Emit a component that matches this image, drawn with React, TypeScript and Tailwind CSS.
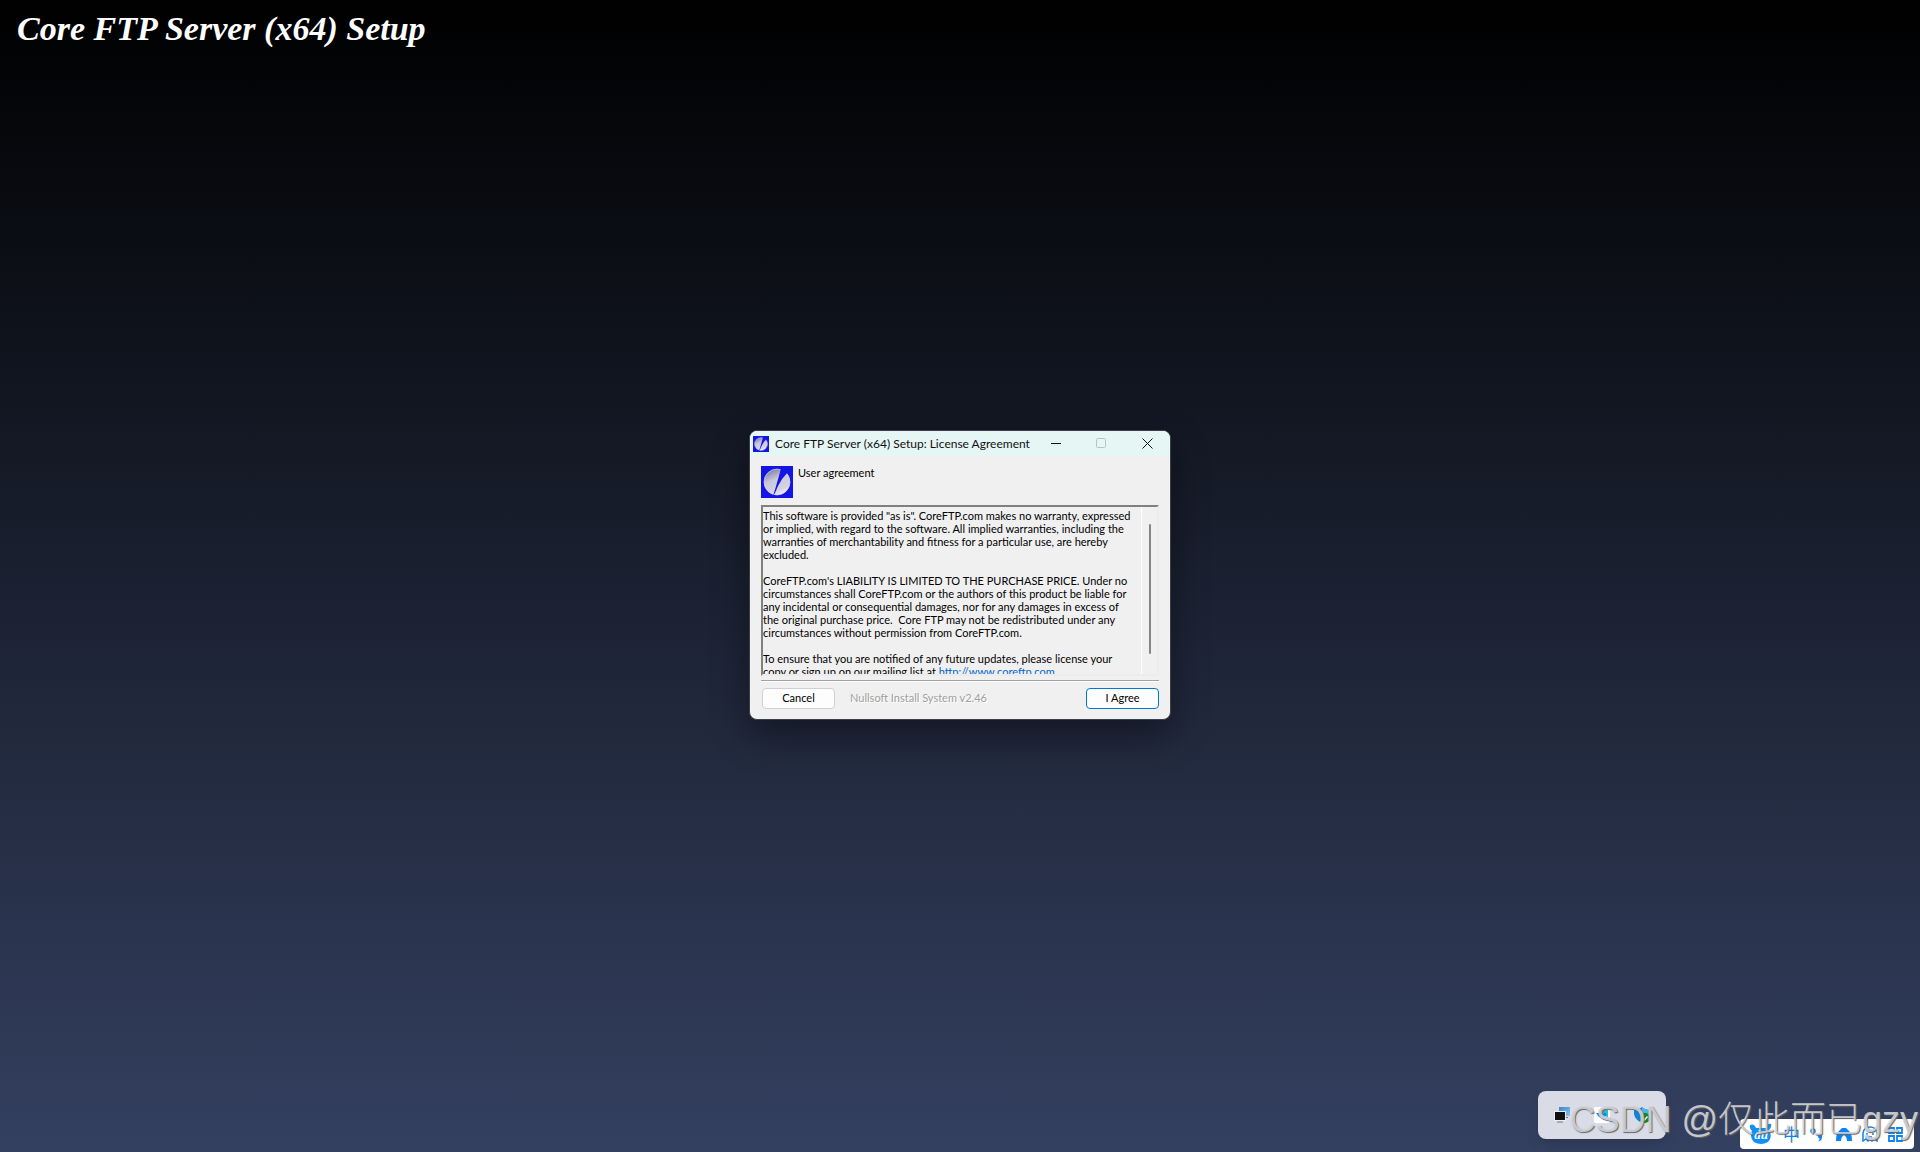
import { useId } from 'react';

function CoreIcon({ className }: { className: string }) {
  const id = useId();
  return (
    <svg viewBox="0 0 32 32" className={className} aria-hidden="true">
      <defs>
        <linearGradient id={id} x1="0.25" y1="0" x2="0.7" y2="1">
          <stop offset="0" stopColor="#7c7ca4" />
          <stop offset="0.4" stopColor="#c9c9dc" />
          <stop offset="0.8" stopColor="#d4d4e4" />
          <stop offset="1" stopColor="#f4f4fa" />
        </linearGradient>
      </defs>
      <rect width="32" height="32" fill="#1414e6" />
      <circle cx="16" cy="16" r="13" fill={`url(#${id})`} stroke="#e6e6f2" strokeWidth="0.6" />
      <path d="M20 2L18.500 8L16.500 15L14.500 22L12 30L14 27L17 20Q21 12 27 6L24 2Z" fill="#1414e6" />
    </svg>
  );
}

function TitleBar() {
  return (
    <header className="flex h-[25px] items-center bg-[#e6f6f5] pl-[3px]">
      <CoreIcon className="size-4 shrink-0" />
      <h2 className="ml-1.5 flex-1 whitespace-nowrap text-[12px] leading-4 text-[#111]">
        Core FTP Server (x64) Setup: License Agreement
      </h2>
      <button aria-label="Minimize" className="grid h-full w-11 place-items-center">
        <svg viewBox="0 0 11 11" className="size-[11px]" stroke="#111" fill="none"><path d="M0 5.500H10" /></svg>
      </button>
      <button aria-label="Maximize" disabled className="grid h-full w-[46px] place-items-center">
        <svg viewBox="0 0 11 11" className="size-[11px]" stroke="#b8c4c4" fill="none"><rect x="0.5" y="0.5" width="9" height="9" rx="1" /></svg>
      </button>
      <button aria-label="Close" className="grid h-full w-[46px] place-items-center">
        <svg viewBox="0 0 11 11" className="size-[11px]" stroke="#111" fill="none"><path d="M0.500 0.500L10.500 10.500M10.500 0.500L0.500 10.500" /></svg>
      </button>
    </header>
  );
}

function License() {
  return (
    <div className="mt-[7px] flex h-[171px] border-2 border-t-[#808080] border-l-[#808080] border-r-[#ececec] border-b-[#ececec]">
      <div className="flex-1 overflow-hidden whitespace-pre pt-0.5 text-[11px] leading-[13px]">
        <p>{'This software is provided "as is". CoreFTP.com makes no warranty, expressed\nor implied, with regard to the software. All implied warranties, including the\nwarranties of merchantability and fitness for a particular use, are hereby\nexcluded.'}</p>
        <p className="mt-[13px]">{"CoreFTP.com's LIABILITY IS LIMITED TO THE PURCHASE PRICE. Under no\ncircumstances shall CoreFTP.com or the authors of this product be liable for\nany incidental or consequential damages, nor for any damages in excess of\nthe original purchase price.  Core FTP may not be redistributed under any\ncircumstances without permission from CoreFTP.com."}</p>
        <p className="mt-[13px]">
          {'To ensure that you are notified of any future updates, please license your\ncopy or sign up on our mailing list at '}
          <a href="http://www.coreftp.com" className="text-[#0066cc] underline">http://www.coreftp.com</a>
        </p>
      </div>
      <div className="flex w-4 justify-center border-l border-white pt-[17px] pb-5">
        <div className="w-0.5 rounded-full bg-[#858585]" />
      </div>
    </div>
  );
}

function SetupWindow() {
  return (
    <section className="w-[422px] overflow-hidden rounded-lg border border-[#3b3f48] bg-[#f0f0f0] font-['Lato',sans-serif] text-black shadow-[0_16px_36px_rgba(0,0,0,0.4)]">
      <TitleBar />
      <div className="px-[11px] py-2.5">
        <div className="flex gap-[5px]">
          <CoreIcon className="size-8" />
          <p className="text-[11px] leading-[14px]">User agreement</p>
        </div>
        <License />
        <div className="mt-1 h-0.5 border-t border-[#a0a0a0] bg-white" />
        <footer className="mt-1.5 flex items-center pl-px text-[11px]">
          <button className="h-[21px] w-[73px] rounded border border-[#d0d0d0] bg-[#fdfdfd]">Cancel</button>
          <span className="ml-[15px] flex-1 text-[#a0a0a0] [text-shadow:1px_1px_0_#fff]">Nullsoft Install System v2.46</span>
          <button className="h-[21px] w-[73px] rounded border border-[#0078d4] bg-[#fdfdfd]">I Agree</button>
        </footer>
      </div>
    </section>
  );
}

function Tray() {
  return (
    <div className="flex h-12 w-32 items-center justify-between rounded-lg bg-[#d9dce6] px-4 shadow-lg">
      <button aria-label="Remote desktop">
        <svg viewBox="0 0 16 16" className="size-4">
          <defs>
            <linearGradient id="screen" x1="0" y1="0" x2="1" y2="1"><stop stopColor="#3c83c8" /><stop offset="1" stopColor="#86c4fa" /></linearGradient>
          </defs>
          <rect x="5" y="0" width="11" height="9" fill="url(#screen)" />
          <rect x="0" y="4" width="12" height="10" fill="#eee" />
          <rect x="1" y="5" width="10" height="8" fill="#111" />
          <path d="M3 15H9M12 10.500H14" stroke="#777" />
        </svg>
      </button>
      <button aria-label="Messenger">
        <svg viewBox="0 0 16 16" className="size-4">
          <rect width="16" height="16" rx="2" fill="#fff" />
          <path d="M7 3H14V10L12 12L7 7Z" fill="#12c8d0" />
          <path d="M2 6H6L8 9L10 6H12V13H10L8 11L5 10Z" fill="#1677ff" />
        </svg>
      </button>
      <button aria-label="Security">
        <svg viewBox="0 0 16 16" className="size-4">
          <path d="M0 3Q5 3 8 0Q11 3 15 3V8Q14 13 8 16Q1 13 0 7Z" fill="#1480d0" />
          <path d="M8 0Q11 3 15 3V8H8Z" fill="#48b8ec" />
          <circle cx="11" cy="11" r="5" fill="#0e8a16" />
          <path d="M8.500 11L10.500 13L13.500 9.500" stroke="#fff" fill="none" strokeWidth="1.500" />
        </svg>
      </button>
    </div>
  );
}

function InputBar() {
  return (
    <div className="flex h-[30px] w-[174px] items-center rounded-sm bg-white pl-[9px] text-[#0a84f5]">
      <button aria-label="Input method" className="w-[34px]">
        <svg viewBox="0 0 24 22" className="h-[22px] w-6">
          <path d="M1 2Q5 0 7 5H17Q18 0 22 1Q23 4 20 7Q24 14 19 19Q12 23 5 19Q0 14 3 8Q0 5 1 2Z" fill="#1090f8" />
          <text x="12" y="16" textAnchor="middle" fill="#fff" className="font-['Liberation_Serif',serif] text-[13px] font-bold italic">du</text>
        </svg>
      </button>
      <button className="w-[26px] text-left font-['Noto_Sans_CJK_SC',sans-serif] text-[17px] leading-5">中</button>
      <button aria-label="Punctuation" className="w-[27px]">
        <svg viewBox="0 0 14 16" className="h-4 w-3.5">
          <circle cx="4" cy="5" r="2" fill="none" stroke="currentColor" strokeWidth="1.500" />
          <path d="M9 10Q9 8 11 8Q13 8 13 11Q13 15 9 15.500Q11 14 10.500 12.500Q9 12 9 10Z" fill="currentColor" />
        </svg>
      </button>
      <button aria-label="Skin" className="w-[26px]">
        <svg viewBox="0 0 16 16" className="size-4" fill="currentColor"><path d="M6 2H10L14 6Q16 9 16 15H11Q11 11 8 9Q5 11 5 15H0Q0 9 2 6Z" /></svg>
      </button>
      <button aria-label="Assistant" className="w-[26px]">
        <svg viewBox="0 0 16 16" className="size-4" fill="none" stroke="currentColor" strokeWidth="1.500"><path d="M1 15V7Q2 1 8 1Q14 1 15 7V15L12 13L10 15L8 13L6 15L4 13Z" /><path d="M5 7V9M11 7V9M6 11H10" /></svg>
      </button>
      <button aria-label="Toolbox">
        <svg viewBox="0 0 16 16" className="size-4" fill="none" stroke="currentColor" strokeWidth="1.800"><path d="M1 2H6V7H1ZM9 2H14V7H9ZM1 10H6V15H1ZM9 10H14V15H9Z" /></svg>
      </button>
    </div>
  );
}

export default function App() {
  return (
    <main className="relative grid min-h-screen place-items-center overflow-hidden bg-linear-to-b/srgb from-black to-[#344060] pb-0.5">
      <h1 className="absolute top-[9px] left-[17px] whitespace-nowrap font-['Liberation_Serif',serif] text-[34px] font-bold italic leading-10 text-white">
        Core FTP Server (x64) Setup
      </h1>
      <SetupWindow />
      <div className="absolute right-[254px] bottom-[13px]"><Tray /></div>
      <div className="absolute right-1.5 bottom-[3px]"><InputBar /></div>
      <p className="pointer-events-none absolute right-0.5 bottom-2 whitespace-nowrap font-['Liberation_Sans','Noto_Sans_CJK_SC',sans-serif] text-[36px] font-light leading-12 text-[#d4d6dc]/90 [text-shadow:1px_1px_1px_#666]">
        CSDN @仅此而已gzy
      </p>
    </main>
  );
}
